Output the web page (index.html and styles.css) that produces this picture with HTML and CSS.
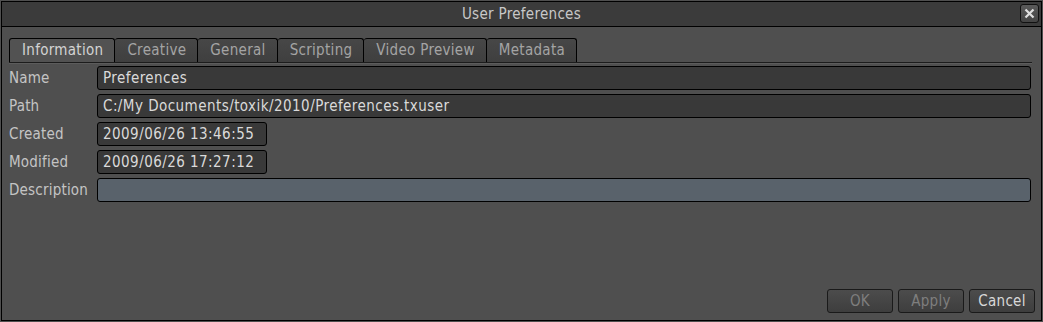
FILE: index.html
```html
<!DOCTYPE html>
<html lang="en">
<head>
  <meta charset="UTF-8" />
  <title>User Preferences</title>
  <link rel="stylesheet" href="styles.css">
</head>
<body>
  <div class="window">
    <div class="titlebar">
      <span class="title">User Preferences</span>
      <button class="close" title="Close">
        <svg width="11" height="11" viewBox="0 0 11 11"><path d="M1.5 1.5 L9.5 9.5 M9.5 1.5 L1.5 9.5" stroke="#e0e0e0" stroke-width="2.2" fill="none"/></svg>
      </button>
    </div>

    <div class="content">
      <div class="tabs">
        <div class="tab active">Information</div>
        <div class="tab">Creative</div>
        <div class="tab">General</div>
        <div class="tab">Scripting</div>
        <div class="tab">Video Preview</div>
        <div class="tab">Metadata</div>
      </div>

      <div class="form">
        <div class="row">
          <label>Name</label>
          <div class="field wide">Preferences</div>
        </div>
        <div class="row">
          <label>Path</label>
          <div class="field wide">C:/My Documents/toxik/2010/Preferences.txuser</div>
        </div>
        <div class="row">
          <label>Created</label>
          <div class="field date">2009/06/26 13:46:55</div>
        </div>
        <div class="row">
          <label>Modified</label>
          <div class="field date">2009/06/26 17:27:12</div>
        </div>
        <div class="row">
          <label>Description</label>
          <div class="field wide editable"></div>
        </div>
      </div>

      <div class="buttons">
        <button class="btn" disabled>OK</button>
        <button class="btn" disabled>Apply</button>
        <button class="btn">Cancel</button>
      </div>
    </div>
  </div>
</body>
</html>
```

FILE: styles.css
```css
body {
  margin: 0;
  padding: 1px 0 0 1px;
  background-color: #4f4f4f;
  font-family: "DejaVu Sans Condensed", "DejaVu Sans", sans-serif;
  font-size: 15px;
  color: #cfcfcf;
}

.window {
  width: 1039px;
  height: 318px;
  border: 1px solid #000;
  background-color: #4f4f4f;
  display: flex;
  flex-direction: column;
}

.titlebar {
  height: 24px;
  border-bottom: 1px solid #000;
  background-color: #3b3b3b;
  display: flex;
  align-items: center;
  justify-content: center;
  position: relative;
}

.title {
  color: #c8c8c8;
  letter-spacing: 0.3px;
}

.close {
  position: absolute;
  right: 2px;
  top: 2px;
  width: 19px;
  height: 19px;
  padding: 0;
  border: 1px solid #111;
  border-radius: 3px;
  background: linear-gradient(#5a5a5a, #444);
  display: flex;
  align-items: center;
  justify-content: center;
}

.content {
  flex: 1;
  display: flex;
  flex-direction: column;
  padding: 11px 6px 7px 7px;
}

.tabs {
  display: flex;
  border-bottom: 1px solid #1c1c1c;
  box-shadow: 0 1px 0 #5c5c5c;
  margin-right: 3px;
}

.tab {
  height: 23px;
  line-height: 23px;
  padding: 0 11px 0 12px;
  border: 1px solid #000;
  border-bottom: none;
  border-left: none;
  border-radius: 3px 3px 0 0;
  background: linear-gradient(#474747, #3f3f3f);
  color: #a4a4a4;
  letter-spacing: 0.3px;
}

.tab.active {
  border-left: 1px solid #000;
  background: #525252;
  color: #d2d2d2;
}

.form {
  margin-top: 3px;
  display: flex;
  flex-direction: column;
  gap: 4px;
}

.row {
  display: flex;
  align-items: center;
  height: 24px;
}

.row label {
  width: 88px;
  color: #c4c4c4;
  letter-spacing: 0.2px;
}

.field {
  height: 22px;
  line-height: 22px;
  border: 1px solid #000;
  border-radius: 3px;
  background-color: #393939;
  padding: 0 5px;
  color: #dadada;
  letter-spacing: 0.45px;
  box-sizing: content-box;
}

.wide {
  flex: 1;
  margin-right: 4px;
}

.date {
  width: 158px;
}

.editable {
  background-color: #59626b;
}

.buttons {
  margin-top: auto;
  display: flex;
  justify-content: flex-end;
  gap: 5px;
}

.btn {
  width: 66px;
  height: 24px;
  padding: 0;
  border: 1px solid #1a1a1a;
  border-radius: 3px;
  background: linear-gradient(#4c4c4c, #3e3e3e);
  font-family: inherit;
  font-size: 15px;
  letter-spacing: 0.3px;
  color: #d8d8d8;
}

.btn:disabled {
  color: #7e7e7e;
}
```
